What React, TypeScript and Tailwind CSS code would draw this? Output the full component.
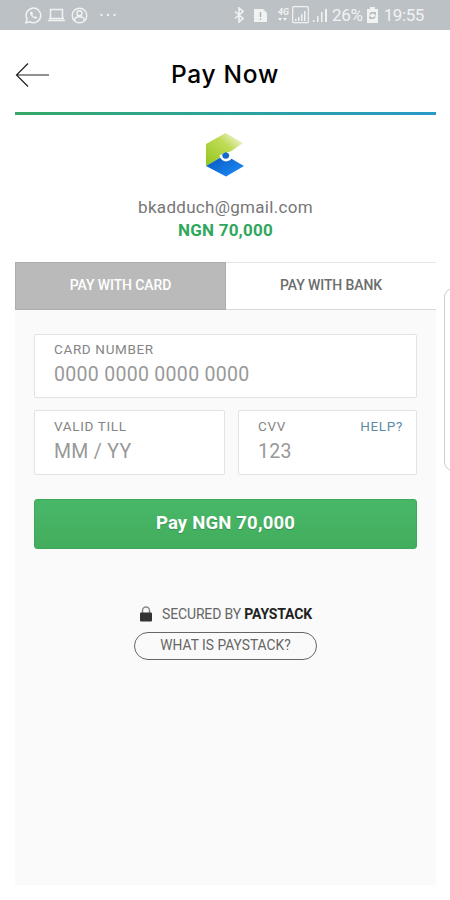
import { useState } from "react";
import type { ReactNode } from "react";

function StatusBar() {
  return (
    <header className="flex h-[30px] shrink-0 items-center bg-[#bbc1c5] text-white/80">
      <div className="flex items-center pl-[25px]">
        <svg width="17" height="17" viewBox="0 0 17 17" fill="none" stroke="currentColor" strokeWidth="1.5">
          <path d="M1 15.8 2 11.8A7.3 7.3 0 1 1 5 14.8Z" />
          <path
            d="M5.8 4.4c-1.2.8-1 2.6.6 4.6s3.9 3.2 5.2 2.5l.6-1.3-1.9-1-.9.8c-1-.5-1.7-1.2-2.1-2.2l.7-.8-.8-2.2Z"
            fill="currentColor"
            stroke="none"
          />
        </svg>
        <svg className="ml-[5px]" width="19" height="14" viewBox="0 0 19 14" fill="none" stroke="currentColor" strokeWidth="1.5">
          <path d="M3.5 10V1.5h12V10M1 12.5h17M2 10.5h15" />
        </svg>
        <svg className="ml-[5px]" width="17" height="17" viewBox="0 0 17 17" fill="none" stroke="currentColor" strokeWidth="1.4">
          <circle cx="8.5" cy="8.5" r="7.3" />
          <circle cx="8.5" cy="6.3" r="2.5" />
          <path d="M4 13.5v-1.5c0-3 9-3 9 0v1.5" />
        </svg>
        <svg className="ml-[11px]" width="18" height="4" viewBox="0 0 18 4" fill="currentColor">
          <circle cx="2.5" cy="2" r="1.2" />
          <circle cx="9" cy="2" r="1.2" />
          <circle cx="15.5" cy="2" r="1.2" />
        </svg>
      </div>
      <div className="ml-auto flex items-center pr-[26px]">
        <svg width="10" height="16" viewBox="0 0 10 16" fill="none" stroke="currentColor" strokeWidth="1.6">
          <path d="m1 4.5 8 7L5 15V1l4 3.5-8 7" />
        </svg>
        <svg className="ml-[10px]" width="13" height="15" viewBox="0 0 13 15">
          <path d="M0 1h9l4 4v9H0Z" fill="currentColor" />
          <path d="M6.5 4v5M6.5 10.5v1.5" stroke="#a9afb3" strokeWidth="1.4" />
        </svg>
        <div className="ml-[10px] flex w-[13px] flex-col items-center font-bold italic">
          <span className="text-[9px] leading-[9px]">4G</span>
          <svg width="10" height="6" viewBox="0 0 10 6" fill="currentColor">
            <path d="M0 1h4L2 4ZM5 1h4L7 4Z" />
          </svg>
        </div>
        <svg className="ml-[2px]" width="17" height="18" viewBox="0 0 17 18">
          <rect x=".7" y=".7" width="15.6" height="16" rx="1" fill="none" stroke="currentColor" strokeWidth="1.2" />
          <path d="M3 13h1.5v2H3zM6 11h1.5v4H6zM9 8h1.5v7H9zM12 5h1.5v10H12z" fill="currentColor" />
        </svg>
        <svg className="ml-[4px]" width="15" height="16" viewBox="0 0 15 16" fill="currentColor">
          <path d="M0 13h1.5v2H0zM4 9h1.5v6H4zM8 5h1.5v10H8zM12 2h2v13h-2z" />
        </svg>
        <span className="ml-[4px] pt-[1px] text-[17px] leading-[21px] tracking-[-0.3px]">26%</span>
        <svg className="ml-[4px]" width="11" height="16" viewBox="0 0 11 16">
          <path d="M3 0h5v2h3v14H0V2h3Z" fill="currentColor" />
          <path d="M2.8 7.5a3 3 0 0 1 5.2-.5v-2M8.2 9.5a3 3 0 0 1-5.2.5v2" stroke="#a9afb3" strokeWidth="1.3" fill="none" />
        </svg>
        <span className="ml-[6px] pt-[1px] text-[17px] leading-[21px] tracking-[-0.4px]">19:55</span>
      </div>
    </header>
  );
}

function BrandMark() {
  return (
    <svg className="mr-auto ml-[190px]" width="40" height="46" viewBox="0 0 40 46">
      <defs>
        <linearGradient id="leaf" x1="1" y1="0" x2="0" y2="1">
          <stop offset="0" stopColor="#ffffff" />
          <stop offset=".4" stopColor="#c0db58" />
          <stop offset="1" stopColor="#93c51c" />
        </linearGradient>
        <linearGradient id="wave" x1="0" y1="0" x2="1" y2="1">
          <stop offset="0" stopColor="#0553b8" />
          <stop offset="1" stopColor="#2090fc" />
        </linearGradient>
      </defs>
      <path d="M20.5 1 38 11 20.5 23 1 34V12Z" fill="url(#leaf)" />
      <path d="M1 34 20 23l19 11-18 10.5Z" fill="url(#wave)" />
      <path d="M14.5 23.5a6.5 6.5 0 1 0 12-4l-6 1Z" fill="#fff" />
      <path d="M17.5 22a3.5 3.5 0 1 0 6.5 0l-3-2Z" fill="#1469cc" />
    </svg>
  );
}

interface FieldProps {
  label: string;
  placeholder: string;
  className?: string;
  children?: ReactNode;
}

function Field({ label, placeholder, className = "", children }: FieldProps) {
  return (
    <div className={`rounded-[2px] border border-[#e3e3e3] bg-white pl-[19px] ${className}`}>
      <div className="flex justify-between pr-[13px] text-[13.5px] leading-[18px] tracking-[0.65px] text-[#858585]">
        <label>{label}</label>
        {children}
      </div>
      <input
        aria-label={label}
        placeholder={placeholder}
        className="mt-[4px] block h-[26px] w-full text-[19.5px] tracking-[0.3px] placeholder:text-[#999] focus:outline-none"
      />
    </div>
  );
}

export default function App() {
  const [tab, setTab] = useState<"card" | "bank">("card");

  const tabClass = (active: boolean) =>
    active
      ? "border border-[#adadad] bg-[#bababa] pb-px text-white"
      : "border-y border-t-[#e6e6e6] border-b-[#d9d9d9] bg-white pb-px text-[#6c6c6c]";

  return (
    <div className="relative flex h-[900px] w-[450px] flex-col overflow-hidden bg-white font-['Roboto',sans-serif]">
      <StatusBar />
      <div className="relative flex h-[82px] items-center justify-center">
        <button aria-label="Back" className="absolute top-[32px] left-[15px]">
          <svg width="35" height="26" viewBox="0 0 35 26" fill="none" stroke="#222" strokeWidth="1.2">
            <path d="M34 13H1.5M13 1.5 1.5 13 13 24.5" />
          </svg>
        </button>
        <h1 className="mt-[7px] font-['Inter',sans-serif] text-[24.5px] font-medium tracking-[0.7px] text-black">
          Pay Now
        </h1>
      </div>
      <div className="mr-[14px] ml-[15px] h-[3px] shrink-0 bg-gradient-to-r from-[#35a866] to-[#2a99c8]" />

      <main className="mr-[14px] ml-[15px] flex h-[770px] flex-col">
        <section className="h-[147px] shrink-0 pt-[17px] text-center">
          <BrandMark />
          <p className="mt-[18px] text-[17px] leading-[22px] tracking-[0.3px] text-[#777]">bkadduch@gmail.com</p>
          <p className="mt-[1px] text-[17px] leading-[22px] font-bold tracking-[0.2px] text-[#2fa75c]">NGN 70,000</p>
        </section>

        <div className="grid h-[48px] shrink-0 grid-cols-[211px_1fr] text-[14px] font-medium tracking-[-0.1px]">
          <button className={tabClass(tab === "card")} onClick={() => setTab("card")}>
            PAY WITH CARD
          </button>
          <button className={tabClass(tab === "bank")} onClick={() => setTab("bank")}>
            PAY WITH BANK
          </button>
        </div>

        <section className="flex-1 bg-[#fafafa] px-[19px] pt-[24px]">
          <Field label="CARD NUMBER" placeholder="0000 0000 0000 0000" className="h-[64px] pt-[5px]" />
          <div className="mt-[12px] flex gap-[13px]">
            <Field label="VALID TILL" placeholder="MM / YY" className="h-[65px] w-[191px] pt-[6px]" />
            <Field label="CVV" placeholder="123" className="h-[65px] flex-1 pt-[6px]">
              <button className="text-[#5e8ca8]">HELP?</button>
            </Field>
          </div>
          <button className="mt-[24px] block h-[50px] w-full rounded-[3px] border border-[#3fa85c] bg-gradient-to-b from-[#48b868] to-[#42ad5d] text-[18.5px] font-bold tracking-[0.2px] text-white [text-shadow:0_1px_1px_rgba(0,0,0,0.2)]">
            Pay NGN 70,000
          </button>

          <div className="mt-[56px] flex items-center justify-center pl-px text-[14px] leading-[18px] tracking-[-0.15px] text-[#666]">
            <svg className="mr-[10px]" width="12" height="16" viewBox="0 0 12 16">
              <path d="M2.5 7V4.5a3.5 3.5 0 0 1 7 0V7" fill="none" stroke="#888" strokeWidth="1.5" />
              <rect y="6.5" width="12" height="9" rx="1" fill="#333" />
            </svg>
            <span>
              SECURED BY <b className="font-bold text-[#222]">PAYSTACK</b>
            </span>
          </div>
          <button className="mx-auto mt-[9px] block h-[28px] w-[183px] rounded-full border border-[#666] pb-[1px] text-[13.8px] text-[#666]">
            WHAT IS PAYSTACK?
          </button>
        </section>
      </main>

      {/* edge panel handle */}
      <div className="absolute top-[288px] left-[444px] h-[183px] w-[20px] rounded-[9px] border border-[#ccc] bg-white" />
    </div>
  );
}
